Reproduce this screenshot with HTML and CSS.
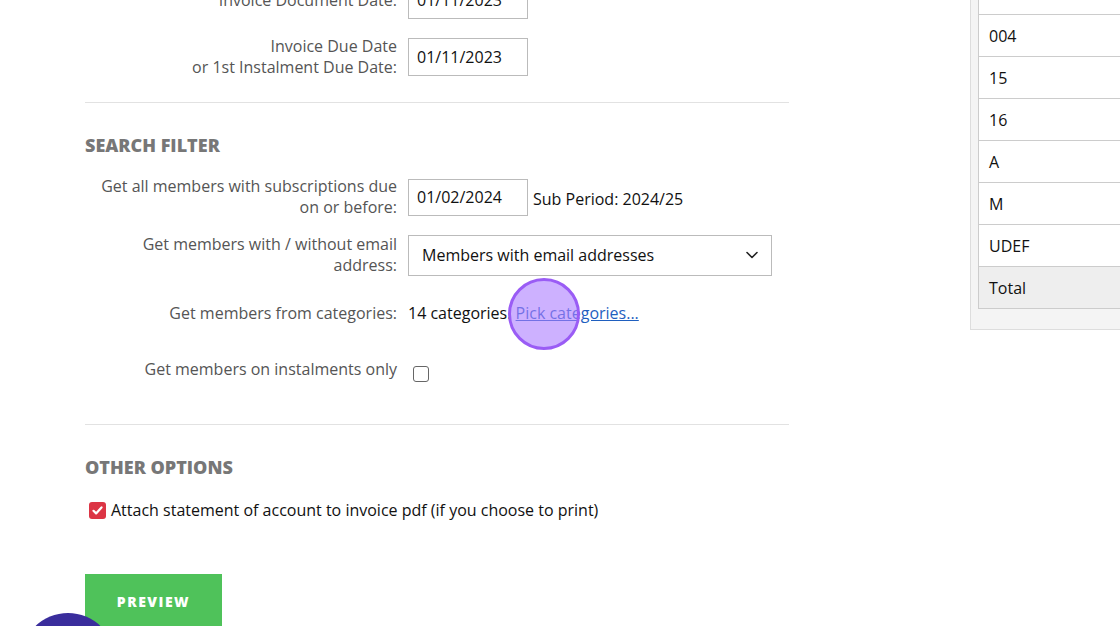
FILE: index.html
```html
<!DOCTYPE html>
<html lang="en">
<head>
    <meta charset="UTF-8">
    <meta name="viewport" content="width=device-width, initial-scale=1.0">
    <title>Generate Invoices</title>
    <link rel="stylesheet" href="styles.css">
</head>
<body>

    <div class="page">
        <div class="main">
            <div class="form-row">
                <label class="form-label">Invoice Document Date:</label>
                <input type="text" class="date-input" value="01/11/2023">
            </div>
            <div class="form-row">
                <label class="form-label">Invoice Due Date<br>or 1st Instalment Due Date:</label>
                <input type="text" class="date-input" value="01/11/2023">
            </div>

            <hr class="divider">

            <h3 class="section-title">Search Filter</h3>

            <div class="section-rows">
                <div class="form-row">
                    <label class="form-label">Get all members with subscriptions due<br>on or before:</label>
                    <input type="text" class="date-input short" value="01/02/2024">
                    <span class="value sub-period">Sub Period: 2024/25</span>
                </div>
                <div class="form-row">
                    <label class="form-label">Get members with / without email<br>address:</label>
                    <div class="select-box">
                        <span>Members with email addresses</span>
                        <svg width="16" height="16" viewBox="0 0 16 16"><path d="M3 5.5l5 5 5-5" fill="none" stroke="#222" stroke-width="1.6" stroke-linecap="round" stroke-linejoin="round"/></svg>
                    </div>
                </div>
                <div class="form-row">
                    <label class="form-label">Get members from categories:</label>
                    <span class="value">14 categories. <a href="#" class="link">Pick categories...</a></span>
                    <!-- click marker from the recording -->
                    <div class="click-dot"></div>
                </div>
                <div class="form-row">
                    <label class="form-label raised">Get members on instalments only</label>
                    <span class="checkbox"></span>
                </div>
            </div>

            <hr class="divider second">

            <h3 class="section-title">Other Options</h3>

            <div class="check-row">
                <span class="checkbox checked">
                    <svg width="13" height="13" viewBox="0 0 13 13"><path d="M2.5 6.8l2.6 2.6 5.4-6" fill="none" stroke="#fff" stroke-width="2.2" stroke-linecap="round" stroke-linejoin="round"/></svg>
                </span>
                <span class="value">Attach statement of account to invoice pdf (if you choose to print)</span>
            </div>

            <button class="preview-btn">Preview</button>
        </div>

        <div class="side-panel">
            <table class="cat-table">
                <tr><td>003</td></tr>
                <tr><td>004</td></tr>
                <tr><td>15</td></tr>
                <tr><td>16</td></tr>
                <tr><td>A</td></tr>
                <tr><td>M</td></tr>
                <tr><td>UDEF</td></tr>
                <tr class="total-row"><td>Total</td></tr>
            </table>
        </div>
    </div>

    <div class="help-bubble"></div>

</body>
</html>
```

FILE: styles.css
```css
body {
    font-family: 'Open Sans', 'Liberation Sans', sans-serif;
    font-size: 16px;
    color: #222;
    background-color: white;
    margin: 0;
    padding: 0;
    height: 626px;
    overflow: hidden;
}

.page {
    display: flex;
    align-items: flex-start;
    margin-top: -60px;
}

.main {
    width: 704px;
    flex-shrink: 0;
    margin-left: 85px;
    padding-top: 39px;
}

.form-row {
    position: relative;
    display: flex;
    align-items: center;
    min-height: 42px;
    margin-bottom: 15px;
}

.form-label {
    width: 312px;
    margin-right: 11px;
    text-align: right;
    color: #555;
    line-height: 21px;
    flex-shrink: 0;
}

.form-label.raised {
    margin-bottom: 4px;
}

.date-input {
    width: 120px;
    height: 38px;
    box-sizing: border-box;
    padding: 0 8px;
    border: 1px solid #bbb;
    font-family: inherit;
    font-size: 16px;
    color: #111;
}

.date-input.short {
    height: 37px;
}

.value {
    color: #111;
    line-height: 21px;
}

.sub-period {
    margin-left: 5px;
    margin-top: 4px;
}

.select-box {
    width: 364px;
    height: 41px;
    box-sizing: border-box;
    border: 1px solid #bbb;
    padding: 0 11px 0 13px;
    display: flex;
    align-items: center;
    justify-content: space-between;
    color: #111;
}

.link {
    color: #1f5fbf;
    text-decoration: underline;
}

.checkbox {
    width: 16px;
    height: 16px;
    box-sizing: border-box;
    border: 1.5px solid #666;
    border-radius: 3px;
    margin-left: 5px;
    margin-top: 5px;
}

.checkbox.checked {
    width: 17px;
    height: 17px;
    border: none;
    background-color: #dc3545;
    display: flex;
    align-items: center;
    justify-content: center;
    margin: 0 5px 0 4px;
}

.divider {
    border: none;
    border-top: 1px solid #e2e2e2;
    margin: 24px 0 0 0;
}

.divider.second {
    margin-top: 32px;
}

.section-title {
    margin: 30px 0 19px 0;
    font-size: 18px;
    font-weight: 800;
    line-height: 24px;
    text-transform: uppercase;
    color: #777;
}

.section-rows .form-row {
    margin-bottom: 16px;
}

.check-row {
    display: flex;
    align-items: center;
    margin-top: 21px;
}

.preview-btn {
    margin-top: 53px;
    width: 137px;
    height: 54px;
    border: none;
    background-color: #4fc25a;
    color: white;
    font-family: inherit;
    font-size: 14px;
    font-weight: 800;
    letter-spacing: 1.5px;
    text-transform: uppercase;
    cursor: pointer;
}

.side-panel {
    margin-left: 181px;
    margin-top: 24px;
    width: 240px;
    flex-shrink: 0;
    background-color: #f4f4f4;
    border: 1px solid #ddd;
    padding: 7px 7px 20px 7px;
}

.cat-table {
    width: 100%;
    border-collapse: collapse;
    background-color: white;
}

.cat-table td {
    border: 1px solid #ccc;
    height: 42px;
    box-sizing: border-box;
    padding: 0 10px;
    color: #111;
}

.cat-table .total-row td {
    background-color: #eee;
}

.click-dot {
    position: absolute;
    left: 423px;
    top: -14px;
    width: 66px;
    height: 66px;
    border-radius: 50%;
    border: 3px solid #9a5cf5;
    background-color: rgba(172, 125, 255, 0.6);
}

.help-bubble {
    position: fixed;
    left: 21px;
    top: 613px;
    width: 94px;
    height: 94px;
    border-radius: 50%;
    background-color: #3a2d9c;
}
```
